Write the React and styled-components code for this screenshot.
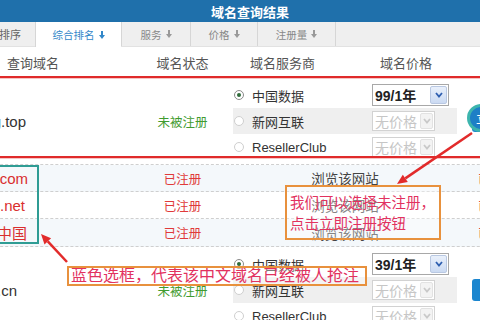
import React from 'react';
import styled, { createGlobalStyle } from 'styled-components';

const GlobalStyle = createGlobalStyle`
  body {
    margin: 0;
    background: #fff;
    overflow: hidden;
    font-family: "Liberation Sans", "Noto Sans CJK SC", sans-serif;
  }
`;

const CJK = `"Liberation Sans", "Noto Sans CJK SC", sans-serif`;

const Screen = styled.div`
  position: relative;
  width: 480px;
  height: 320px;
  overflow: hidden;
  background: #fff;
`;

const Page = styled.div`
  width: 580px;
  margin-left: -40px;
`;

const TitleBar = styled.div`
  height: 22px;
  background: #1f70ab;
  color: #fff;
  font-family: ${CJK};
  font-weight: bold;
  font-size: 13px;
  display: flex;
  align-items: center;
  justify-content: center;
`;

const TabBar = styled.div`
  height: 25px;
  display: flex;
  background: #efefef;
  border-bottom: 1px solid #e2e2e2;
  box-sizing: border-box;
`;

const SortLabel = styled.div`
  width: 75px;
  padding-left: 39px;
  box-sizing: border-box;
  display: flex;
  align-items: center;
  font-family: ${CJK};
  font-size: 11px;
  color: #666;
`;

const Tab = styled.div`
  width: ${(p) => p.$w}px;
  display: flex;
  align-items: center;
  justify-content: center;
  gap: 4px;
  border-left: 1px solid #d6d6d6;
  box-sizing: border-box;
  height: ${(p) => (p.$active ? '25px' : '24px')};
  background: ${(p) => (p.$active ? '#fff' : 'transparent')};
  color: ${(p) => (p.$active ? '#3187c9' : '#888')};
  font-family: ${CJK};
  font-size: 10.5px;
`;

const TabEnd = styled.div`
  border-left: 1px solid #d6d6d6;
  flex: 1;
`;

const HeaderRow = styled.div`
  display: grid;
  grid-template-columns: 172px 101px 139px 85px 1fr;
  height: 31px;
  align-items: center;
  font-family: ${CJK};
  font-size: 13px;
  color: #555;
`;

const HeadCell = styled.div`
  padding-left: ${(p) => p.$pad || 0}px;
  text-align: ${(p) => (p.$center ? 'center' : 'left')};
`;

const Row = styled.div`
  display: grid;
  grid-template-columns: 172px 101px 224px 1fr;
  height: ${(p) => p.$h}px;
  box-sizing: border-box;
  border-bottom: 1px dashed #cfcfcf;
  background: ${(p) => (p.$shade ? '#f4f8fb' : '#fff')};
  align-items: center;
`;

/* the column ends at x=132 on screen; $end is where the name stops */
const DomainCell = styled.div`
  text-align: right;
  padding-right: ${(p) => 132 - (p.$end || 26)}px;
  font-family: ${CJK};
  font-size: 15px;
  color: ${(p) => (p.$taken ? '#d92f2f' : '#333')};
  white-space: nowrap;
`;

const Status = styled.div`
  text-align: center;
  font-family: ${CJK};
  font-size: 12.5px;
  color: ${(p) => (p.$free ? '#3f9b2f' : '#e03a3a')};
`;

const Options = styled.div`
  align-self: start;
  padding-top: 4px;
  display: flex;
  flex-direction: column;
`;

const OptionRow = styled.div`
  display: grid;
  grid-template-columns: 139px 85px;
  height: 26px;
  align-items: center;
  background: ${(p) => (p.$shade ? '#efefef' : 'transparent')};
`;

const Provider = styled.label`
  display: flex;
  align-items: center;
  gap: 8px;
  padding-left: 1px;
  font-family: ${CJK};
  font-size: 13px;
  color: #333;
`;

const Radio = styled.span`
  width: 10px;
  height: 10px;
  border-radius: 50%;
  border: 1px solid ${(p) => (p.$on ? '#8a8a8a' : '#cfcfcf')};
  background: #fff;
  box-sizing: border-box;
  display: flex;
  align-items: center;
  justify-content: center;
  &::after {
    content: '';
    width: 4px;
    height: 4px;
    border-radius: 50%;
    background: ${(p) => (p.$on ? '#2f6b3a' : 'transparent')};
  }
`;

const Select = styled.div`
  width: ${(p) => (p.$disabled ? 63 : 77)}px;
  height: ${(p) => (p.$disabled ? 20 : 22)}px;
  box-sizing: border-box;
  border: 1px solid ${(p) => (p.$disabled ? '#d2d2d2' : '#a8a8a8')};
  background: #fff;
  display: flex;
  align-items: stretch;
  font-family: ${CJK};
  font-size: 14px;
  font-weight: ${(p) => (p.$disabled ? 'normal' : 'bold')};
  color: ${(p) => (p.$disabled ? '#c6c6c6' : '#222')};
`;

const SelectText = styled.span`
  flex: 1;
  display: flex;
  align-items: center;
  padding-left: 2px;
  white-space: nowrap;
`;

const SelectArrow = styled.span`
  width: ${(p) => (p.$disabled ? 11 : 15)}px;
  margin: 1px;
  display: flex;
  align-items: center;
  justify-content: center;
  background: ${(p) =>
    p.$disabled ? '#f3f3f3' : 'linear-gradient(#e9f0fb, #cbdaf2)'};
  border: 1px solid ${(p) => (p.$disabled ? '#e2e2e2' : '#b9c8e2')};
  border-radius: 2px;
`;

const Browse = styled.div`
  text-align: center;
  font-family: ${CJK};
  font-size: 13.5px;
  color: #444;
`;

const ActionCell = styled.div`
  padding-left: 15px;
  display: flex;
  align-items: center;
`;

const RegButton = styled.div`
  height: 22px;
  padding: 0 8px;
  border-radius: 3px;
  background: #1b86cf;
  color: #fff;
  font-family: ${CJK};
  font-size: 12px;
  display: flex;
  align-items: center;
  white-space: nowrap;
`;

const RedLink = styled.span`
  margin-left: 6px;
  color: #e03a3a;
  font-family: ${CJK};
  font-size: 12.5px;
`;

/* annotation layer */
const RedFrame = styled.div`
  position: absolute;
  left: -5px;
  top: 76px;
  width: 520px;
  height: 82px;
  box-sizing: border-box;
  border: 2px solid #e02b2b;
  box-shadow: 0 1px 0 #f6c4c4, inset 0 1px 0 #f6c4c4;
`;

const TealFrame = styled.div`
  position: absolute;
  left: -5px;
  top: 165px;
  width: 44px;
  height: 79px;
  box-sizing: border-box;
  border: 2px solid #2f9c94;
`;

const Ring = styled.div`
  position: absolute;
  left: 467px;
  top: 104px;
  width: 28px;
  height: 28px;
  box-sizing: border-box;
  border-radius: 50%;
  border: 3px solid #3db5ae;
  background: #1d7fc6;
  color: #fff;
  font-family: ${CJK};
  font-size: 12px;
  display: flex;
  align-items: center;
  padding-left: 6px;
`;

const Note = styled.div`
  position: absolute;
  left: ${(p) => p.$x}px;
  top: ${(p) => p.$y}px;
  width: ${(p) => p.$w}px;
  height: ${(p) => p.$h}px;
  box-sizing: border-box;
  border: 2px solid #e8913d;
  background: rgba(255, 255, 255, 0.35);
  color: #e2325f;
  font-family: ${CJK};
  font-size: ${(p) => p.$size}px;
  line-height: ${(p) => p.$lh}px;
  padding: ${(p) => p.$pad};
  white-space: nowrap;
  overflow: hidden;
`;

const Arrows = styled.svg`
  position: absolute;
  left: 0;
  top: 0;
  pointer-events: none;
`;

const DownArrow = ({ color }) => (
  <svg width="6" height="8" viewBox="0 0 6 8">
    <rect x="2" y="0" width="2" height="4" fill={color} />
    <polygon points="0,4 6,4 3,8" fill={color} />
  </svg>
);

const Chevron = ({ color }) => (
  <svg width="8" height="6" viewBox="0 0 8 6">
    <polyline points="1,1 4,4.5 7,1" fill="none" stroke={color} strokeWidth="1.8" />
  </svg>
);

const PriceSelect = ({ value, disabled }) => (
  <Select $disabled={disabled}>
    <SelectText>{value}</SelectText>
    <SelectArrow $disabled={disabled}>
      <Chevron color={disabled ? '#c9c9c9' : '#2f5fb0'} />
    </SelectArrow>
  </Select>
);

const tabs = [
  { label: '综合排名', w: 86, active: true },
  { label: '服务', w: 69 },
  { label: '价格', w: 67 },
  { label: '注册量', w: 78 },
];

const providers = [
  { name: '中国数据', on: true },
  { name: '新网互联' },
  { name: 'ResellerClub' },
];

const ProviderList = ({ price }) => (
  <Options>
    {providers.map((p, i) => (
      <OptionRow key={p.name} $shade={i === 1}>
        <Provider>
          <Radio $on={p.on} />
          {p.name}
        </Provider>
        <PriceSelect value={p.on ? price : '无价格'} disabled={!p.on} />
      </OptionRow>
    ))}
  </Options>
);

const taken = [
  { name: 'dns.com', h: 27, shade: true, end: 28 },
  { name: 'dns.net', h: 27, end: 25 },
  { name: 'dns.中国', h: 28, shade: true, end: 27 },
];

export default function App() {
  return (
    <Screen>
      <GlobalStyle />
      <Page>
        <TitleBar>域名查询结果</TitleBar>
        <TabBar>
          <SortLabel>排序</SortLabel>
          {tabs.map((t) => (
            <Tab key={t.label} $w={t.w} $active={t.active}>
              {t.label}
              <DownArrow color={t.active ? '#3187c9' : '#999'} />
            </Tab>
          ))}
          <TabEnd />
        </TabBar>
        <HeaderRow>
          <HeadCell $pad={47}>查询域名</HeadCell>
          <HeadCell $center>域名状态</HeadCell>
          <HeadCell $pad={17}>域名服务商</HeadCell>
          <HeadCell $pad={8}>域名价格</HeadCell>
          <HeadCell />
        </HeaderRow>

        <Row $h={87}>
          <DomainCell>ifeng.top</DomainCell>
          <Status $free>未被注册</Status>
          <ProviderList price="99/1年" />
          <ActionCell>
            <RegButton>立即注册</RegButton>
          </ActionCell>
        </Row>

        {taken.map((d) => (
          <Row key={d.name} $h={d.h} $shade={d.shade}>
            <DomainCell $taken $end={d.end}>{d.name}</DomainCell>
            <Status>已注册</Status>
            <Browse>浏览该网站</Browse>
            <ActionCell>
              <RedLink>已注册</RedLink>
            </ActionCell>
          </Row>
        ))}

        <Row $h={87}>
          <DomainCell $end={17}>ifeng.cn</DomainCell>
          <Status $free>未被注册</Status>
          <ProviderList price="39/1年" />
          <ActionCell>
            <RegButton>立即注册</RegButton>
          </ActionCell>
        </Row>
      </Page>

      <RedFrame />
      <TealFrame />
      <Ring>立</Ring>
      <Note $x={285} $y={185} $w={156} $h={55} $size={14.5} $lh={21} $pad="6px 3px 0">
        我们可以选择未注册，
        <br />
        点击立即注册按钮
      </Note>
      <Note $x={67} $y={266} $w={300} $h={20} $size={16} $lh={16} $pad="0 2px">
        蓝色选框，代表该中文域名已经被人抢注
      </Note>
      <Arrows width="480" height="320" viewBox="0 0 480 320">
        <line x1="472" y1="133" x2="405.3" y2="178.4" stroke="#e22b2b" strokeWidth="2.5" />
        <polygon points="397,184 402.8,174.7 407.8,182.1" fill="#e22b2b" />
        <line x1="67" y1="262" x2="47.8" y2="241.3" stroke="#e22b2b" strokeWidth="2.5" />
        <polygon points="41,234 51.1,238.2 44.5,244.4" fill="#e22b2b" />
      </Arrows>
    </Screen>
  );
}
